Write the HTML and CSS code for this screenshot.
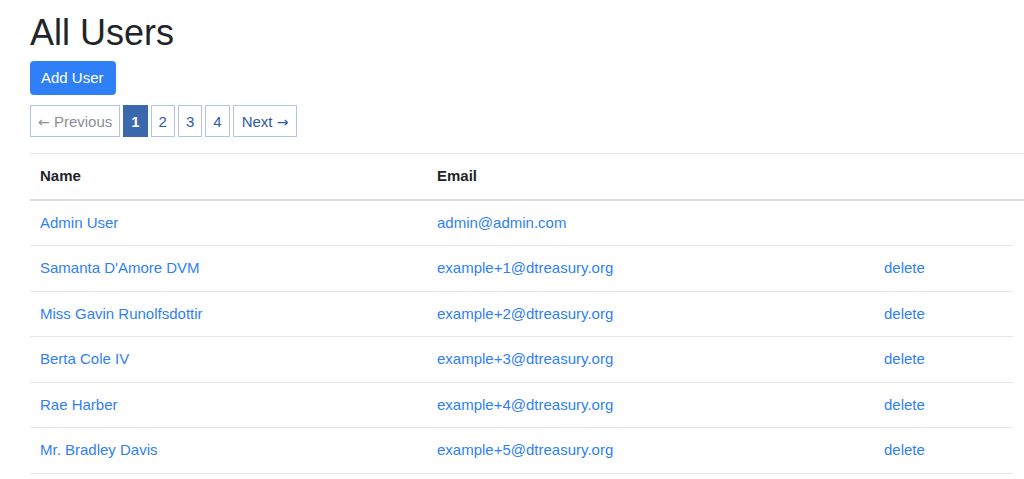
FILE: index.html
```html
<!DOCTYPE html>
<html lang="en">
<head>
  <meta charset="UTF-8">
  <title>All Users</title>
  <link rel="stylesheet" href="styles.css">
</head>
<body>
  <div class="container">
    <h1>All Users</h1>
    <a class="btn-add" href="#">Add User</a>

    <ul class="pagination">
      <li class="disabled"><span><i class="arrow">&larr;</i> Previous</span></li>
      <li class="active"><span>1</span></li>
      <li><a href="#">2</a></li>
      <li><a href="#">3</a></li>
      <li><a href="#">4</a></li>
      <li class="next"><a href="#">Next <i class="arrow">&rarr;</i></a></li>
    </ul>

    <table class="users">
      <thead>
        <tr>
          <th class="col-name">Name</th>
          <th class="col-email">Email</th>
          <th class="col-action"></th>
          <th class="col-extra"></th>
        </tr>
      </thead>
      <tbody>
        <tr>
          <td><a href="#">Admin User</a></td>
          <td><a href="#">admin@admin.com</a></td>
        </tr>
        <tr>
          <td><a href="#">Samanta D'Amore DVM</a></td>
          <td><a href="#">example+1@dtreasury.org</a></td>
          <td><a href="#">delete</a></td>
        </tr>
        <tr>
          <td><a href="#">Miss Gavin Runolfsdottir</a></td>
          <td><a href="#">example+2@dtreasury.org</a></td>
          <td><a href="#">delete</a></td>
        </tr>
        <tr>
          <td><a href="#">Berta Cole IV</a></td>
          <td><a href="#">example+3@dtreasury.org</a></td>
          <td><a href="#">delete</a></td>
        </tr>
        <tr>
          <td><a href="#">Rae Harber</a></td>
          <td><a href="#">example+4@dtreasury.org</a></td>
          <td><a href="#">delete</a></td>
        </tr>
        <tr>
          <td><a href="#">Mr. Bradley Davis</a></td>
          <td><a href="#">example+5@dtreasury.org</a></td>
          <td><a href="#">delete</a></td>
        </tr>
      </tbody>
    </table>
  </div>
</body>
</html>
```

FILE: styles.css
```css
body {
  margin: 0;
  font-family: 'Liberation Sans', Arial, sans-serif;
  font-size: 15px;
  color: #212529;
  background: #fff;
}

a {
  color: #2f7ff7;
  text-decoration: none;
}

.container {
  padding: 11px 0 0 30px;
}

h1 {
  margin: 0 0 6px;
  font-size: 36px;
  line-height: 44px;
  font-weight: 500;
}

.btn-add {
  display: inline-block;
  background: #2f7ff7;
  color: #fff;
  border-radius: 4px;
  padding: 0 12px 0 11px;
  height: 34px;
  line-height: 34px;
  font-size: 15px;
}

.pagination {
  list-style: none;
  display: flex;
  gap: 3px;
  margin: 10px 0 16px;
  padding: 0;
}

.pagination li span,
.pagination li a {
  display: block;
  height: 30px;
  line-height: 31px;
  padding: 0 7px;
  border: 1px solid #b3c4ea;
  color: #2c5aa6;
}

.pagination .disabled span {
  color: #8a8f96;
}

.pagination .active span {
  background: #3b67ad;
  border-color: #3b67ad;
  color: #fff;
  font-weight: bold;
}

.pagination .next a {
  padding: 0 8px;
}

.arrow {
  font-style: normal;
  font-family: 'DejaVu Sans', sans-serif;
  font-size: 14px;
}

.users {
  border-collapse: collapse;
  table-layout: fixed;
  width: 994px;
}

.col-name { width: 377px; }
.col-email { width: 427px; }
.col-action { width: 119px; }

.users th,
.users td {
  text-align: left;
  padding: 11px 10px 11px 10px;
  line-height: 22.5px;
  border-top: 1px solid #e2e4e8;
}

.users th {
  font-weight: bold;
  border-bottom: 2px solid #dcdee3;
}

.users tbody tr:last-child td {
  border-bottom: 1px solid #e2e4e8;
}
```
